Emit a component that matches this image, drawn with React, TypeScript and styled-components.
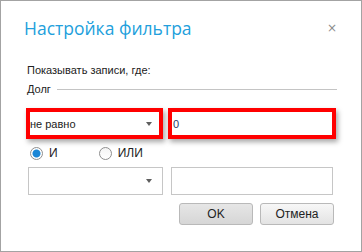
import React from "react";
import styled, { createGlobalStyle } from "styled-components";

const GlobalStyle = createGlobalStyle`
  html, body {
    margin: 0;
    padding: 0;
    background: #fff;
  }
  * {
    box-sizing: border-box;
  }
`;

function App() {
  return (
    <>
      <GlobalStyle />
      <Dialog>
        <Header>
          <Title>Настройка фильтра</Title>
          <Close>×</Close>
        </Header>
        <Caption>Показывать записи, где:</Caption>
        <Group>
          <GroupLabel>Долг</GroupLabel>
          <GroupLine />
        </Group>
        <Row $gap={5}>
          <Select $width={137} $marked>
            <span>не равно</span>
            <Arrow />
          </Select>
          <Input $width={168} $marked>
            0
          </Input>
        </Row>
        <RadioRow>
          <RadioItem>
            <Radio $checked />
            <span>И</span>
          </RadioItem>
          <RadioItem>
            <Radio />
            <span>ИЛИ</span>
          </RadioItem>
        </RadioRow>
        <Row $gap={8} $indent={2}>
          <Select $width={135}>
            <span />
            <Arrow />
          </Select>
          <Input $width={162} />
        </Row>
        <Buttons>
          <Button $primary>OK</Button>
          <Button>Отмена</Button>
        </Buttons>
      </Dialog>
    </>
  );
}

export default App;

const Dialog = styled.div`
  width: 362px;
  height: 252px;
  border: 1px solid #a3a3a3;
  background: #fff;
  padding: 0 0 0 25px;
  font-family: "Liberation Sans", Arial, sans-serif;
  font-size: 11px;
  color: #222;
`;

const Header = styled.div`
  display: flex;
  align-items: center;
  justify-content: space-between;
  width: 311px;
  height: 55px;
  padding-bottom: 2px;
`;

const Title = styled.div`
  margin-left: -2px;
  font-family: "Open Sans", "Noto Sans", sans-serif;
  font-size: 17.5px;
  font-weight: 400;
  color: #239fdc;
`;

const Close = styled.div`
  font-family: "DejaVu Sans", sans-serif;
  font-size: 12px;
  color: #8c8c8c;
  line-height: 1;
`;

const Caption = styled.div`
  margin: 8px 0 0 1px;
  line-height: 13px;
`;

const Group = styled.div`
  display: flex;
  align-items: center;
  gap: 6px;
  width: 310px;
  margin: 6px 0 0 1px;
  height: 13px;
`;

const GroupLabel = styled.span`
  line-height: 13px;
`;

const GroupLine = styled.div`
  flex: 1;
  height: 1px;
  background: #c4c4c4;
`;

const Row = styled.div<{ $gap: number; $indent?: number }>`
  display: flex;
  gap: ${(p) => p.$gap}px;
  margin-left: ${(p) => p.$indent ?? 0}px;
`;

const Field = styled.div<{ $width: number; $marked?: boolean }>`
  width: ${(p) => p.$width}px;
  height: ${(p) => (p.$marked ? 31 : 28)}px;
  border: ${(p) => (p.$marked ? "4px solid #ff0000" : "1px solid #c6c6c6")};
  box-shadow: ${(p) => (p.$marked ? "2px 3px 5px rgba(0, 0, 0, 0.35)" : "none")};
  background: #fff;
  display: flex;
  align-items: center;
`;

const Select = styled(Field)`
  justify-content: space-between;
  padding: 0 ${(p) => (p.$marked ? 7 : 10)}px 0 ${(p) => (p.$marked ? 0 : 4)}px;
  margin-top: ${(p) => (p.$marked ? 12 : 0)}px;
`;

const Input = styled(Field)`
  padding-left: ${(p) => (p.$marked ? 1 : 4)}px;
  margin-top: ${(p) => (p.$marked ? 12 : 0)}px;
  color: #2b3a66;
`;

const Arrow = styled.span`
  width: 0;
  height: 0;
  border-left: 3.5px solid transparent;
  border-right: 3.5px solid transparent;
  border-top: 4px solid #5e5e5e;
`;

const RadioRow = styled.div`
  display: flex;
  gap: 41px;
  height: 28px;
  align-items: center;
  padding-left: 4px;
`;

const RadioItem = styled.label`
  display: flex;
  align-items: center;
  gap: 6px;
  font-size: 12px;
`;

const Radio = styled.span<{ $checked?: boolean }>`
  width: 13px;
  height: 13px;
  border-radius: 50%;
  border: 1px solid #8e8e8e;
  background: ${(p) =>
    p.$checked
      ? "radial-gradient(circle, #1b86d6 0 3.5px, #fff 4.5px)"
      : "linear-gradient(#f4f4f4, #fff)"};
`;

const Buttons = styled.div`
  display: flex;
  gap: 7px;
  margin: 8px 0 0 153px;
`;

const Button = styled.button<{ $primary?: boolean }>`
  width: 74px;
  height: 22px;
  border: 1px solid #b9b9b9;
  border-radius: 3px;
  background: ${(p) =>
    p.$primary
      ? "linear-gradient(#e6e6e6, #d6d6d6)"
      : "linear-gradient(#f7f7f7, #e3e3e3)"};
  font-family: "Liberation Sans", Arial, sans-serif;
  font-size: 12px;
  color: #222;
  padding: 0;
`;
